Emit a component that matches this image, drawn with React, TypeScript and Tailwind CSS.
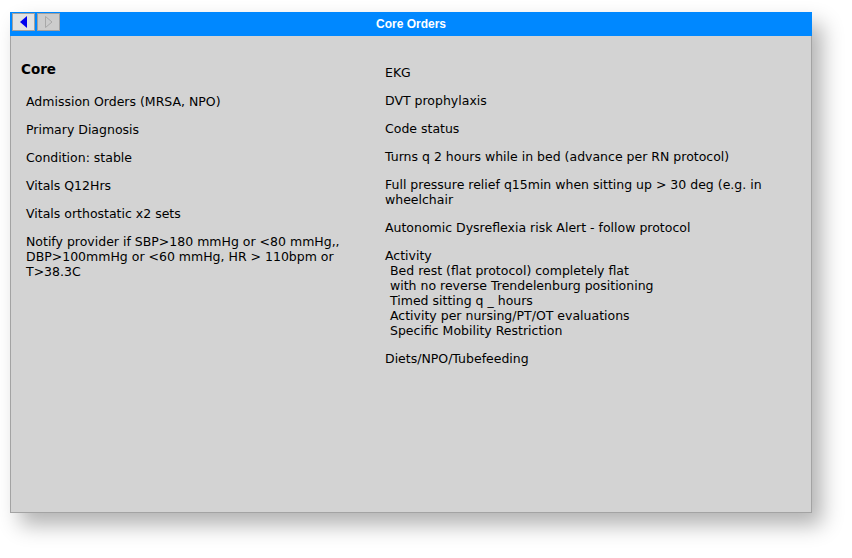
import React from 'react';

interface OrderItem {
  lines: string[];
  sub?: string[];
}

const leftItems: OrderItem[] = [
  { lines: ['Admission Orders (MRSA, NPO)'] },
  { lines: ['Primary Diagnosis'] },
  { lines: ['Condition: stable'] },
  { lines: ['Vitals Q12Hrs'] },
  { lines: ['Vitals orthostatic x2 sets'] },
  { lines: ['Notify provider if SBP>180 mmHg or <80 mmHg,, DBP>100mmHg or <60 mmHg, HR > 110bpm or T>38.3C'] },
];

const rightItems: OrderItem[] = [
  { lines: ['EKG'] },
  { lines: ['DVT prophylaxis'] },
  { lines: ['Code status'] },
  { lines: ['Turns q 2 hours while in bed (advance per RN protocol)'] },
  { lines: ['Full pressure relief q15min when sitting up > 30 deg (e.g. in wheelchair'] },
  { lines: ['Autonomic Dysreflexia risk Alert - follow protocol'] },
  {
    lines: ['Activity'],
    sub: [
      'Bed rest (flat protocol) completely flat',
      'with no reverse Trendelenburg positioning',
      'Timed sitting q _ hours',
      'Activity per nursing/PT/OT evaluations',
      'Specific Mobility Restriction',
    ],
  },
  { lines: ['Diets/NPO/Tubefeeding'] },
];

function OrderList({ items }: { items: OrderItem[] }) {
  return (
    <div className="flex flex-col gap-[13px]">
      {items.map((item, i) => (
        <div key={i} className="leading-[15px]">
          {item.lines.map((l, j) => (
            <p key={j}>{l}</p>
          ))}
          {item.sub?.map((s, j) => (
            <p key={j} className="pl-[5px]">
              {s}
            </p>
          ))}
        </div>
      ))}
    </div>
  );
}

export default function App() {
  return (
    <div className="w-[852px] h-[558px] bg-white pt-[12px] pl-[10px]">
      <div className="w-[802px] h-[501px] flex flex-col border-x border-b border-[#a3a3a3] bg-[#d3d3d3] shadow-[10px_12px_20px_rgba(0,0,0,0.3)]">
        <header className="relative h-[24px] -mx-px bg-[#0088ff] flex items-center justify-center">
          <div className="absolute left-[2px] top-[1px] flex gap-[2px]">
            <button className="w-[23px] h-[18px] border border-[#a0a0a0] bg-[#e2e2e2] flex items-center justify-center">
              <svg width="8" height="12" viewBox="0 0 8 12">
                <polygon points="7,0 7,12 0,6" fill="#0000ee" />
              </svg>
            </button>
            <button className="w-[23px] h-[18px] border border-[#a0a0a0] bg-[#cccccc] flex items-center justify-center">
              <svg width="8" height="12" viewBox="0 0 8 12">
                <polygon points="0.5,0.5 0.5,11.5 7,6" fill="none" stroke="#a8a8a8" />
              </svg>
            </button>
          </div>
          <h1 className="text-white font-bold text-[12px] font-['Liberation_Sans',Arial,sans-serif]">Core Orders</h1>
        </header>
        <div className="flex pl-[10px] pr-[16px] text-[12.5px] text-black font-['DejaVu_Sans',sans-serif]">
          <section className="w-[354px] pt-[24px]">
            <h2 className="font-bold text-[13.5px] leading-[18px] mb-[16px]">Core</h2>
            <div className="pl-[5px]">
              <OrderList items={leftItems} />
            </div>
          </section>
          <section className="flex-1 ml-[10px] pt-[29px]">
            <OrderList items={rightItems} />
          </section>
        </div>
      </div>
    </div>
  );
}
